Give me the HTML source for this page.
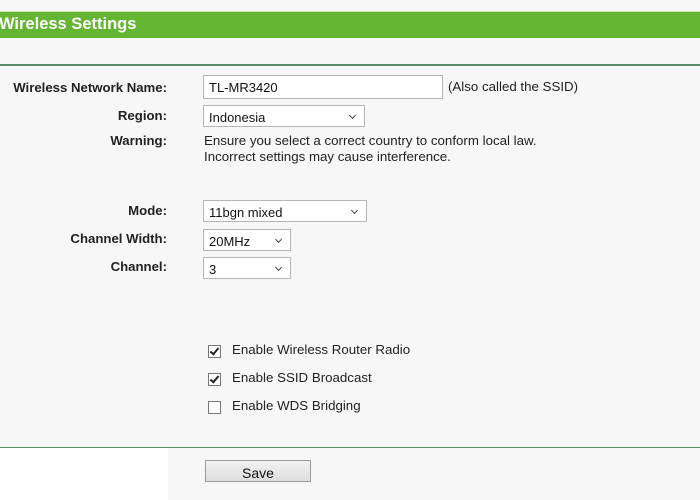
<!DOCTYPE html>
<html><head><meta charset="utf-8"><style>
body{margin:0;width:700px;height:500px;background:#f7f7f7;position:relative;overflow:hidden;font-family:"Liberation Sans",Arial,sans-serif;font-size:13.3px;color:#222}
.a{position:absolute}
.bar{left:0;top:11px;width:700px;height:26px;background:#64b532;border-top:1px solid #c9e6b6}
.bar span{position:absolute;left:-1px;top:3px;color:#fff;font-weight:bold;font-size:16.5px}
.hr{left:0;width:700px;height:2px;background:#5e8a6c}
.lbl{right:533px;font-weight:bold;font-size:13.2px;color:#222;text-align:right;white-space:nowrap}
.box{background:#fff;border:1px solid #b5b5b5;box-sizing:border-box;font-size:13px;padding:4px 0 0 5px;color:#111}
.sel:after{content:"";position:absolute;right:9px;top:7px;width:4px;height:4px;border-right:1.5px solid #444;border-bottom:1.5px solid #444;transform:rotate(45deg)}
.cb{width:13px;height:13px;border:1px solid #777;background:#fff;box-sizing:border-box}
.cb.c:after{content:"";position:absolute;left:3px;top:0px;width:3px;height:7px;border-right:2px solid #222;border-bottom:2px solid #222;transform:rotate(40deg)}
.t{white-space:nowrap}
</style></head><body>
<div class="a bar"><span>Wireless Settings</span></div>
<div class="a hr" style="top:64px"></div>
<div class="a lbl" style="top:80px">Wireless Network Name:</div>
<div class="a box" style="left:203px;top:75px;width:240px;height:24px">TL-MR3420</div>
<div class="a t" style="left:448px;top:79px">(Also called the SSID)</div>
<div class="a lbl" style="top:108px">Region:</div>
<div class="a box sel" style="left:203px;top:105px;width:162px;height:22px">Indonesia</div>
<div class="a lbl" style="top:133px">Warning:</div>
<div class="a t" style="left:204px;top:133px;line-height:16px">Ensure you select a correct country to conform local law.<br>Incorrect settings may cause interference.</div>
<div class="a lbl" style="top:203px">Mode:</div>
<div class="a box sel" style="left:203px;top:200px;width:164px;height:22px">11bgn mixed</div>
<div class="a lbl" style="top:231px">Channel Width:</div>
<div class="a box sel" style="left:203px;top:229px;width:88px;height:22px">20MHz</div>
<div class="a lbl" style="top:259px">Channel:</div>
<div class="a box sel" style="left:203px;top:257px;width:88px;height:22px">3</div>
<div class="a cb c" style="left:208px;top:345px"></div>
<div class="a t" style="left:232px;top:342px">Enable Wireless Router Radio</div>
<div class="a cb c" style="left:208px;top:373px"></div>
<div class="a t" style="left:232px;top:370px">Enable SSID Broadcast</div>
<div class="a cb" style="left:208px;top:401px"></div>
<div class="a t" style="left:232px;top:398px">Enable WDS Bridging</div>
<div class="a hr" style="top:447px;height:1px"></div>
<div class="a" style="left:0;top:448px;width:168px;height:52px;background:#fff"></div>
<div class="a" style="left:205px;top:460px;width:106px;height:22px;box-sizing:border-box;border:1px solid #9a9a9a;background:linear-gradient(#f2f2f2,#dedede);text-align:center;font-size:14px;line-height:24px;color:#111">Save</div>
</body></html>
